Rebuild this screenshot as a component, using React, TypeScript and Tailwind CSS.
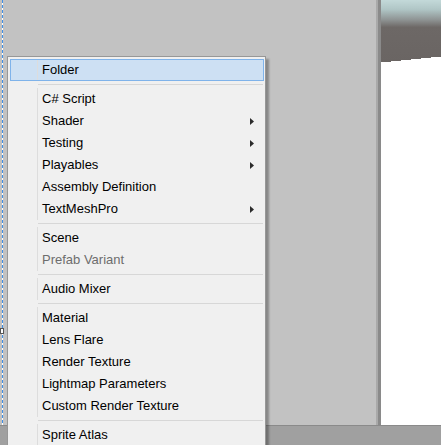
type Entry =
  | { kind: "item"; label: string; sub?: boolean; disabled?: boolean; active?: boolean }
  | { kind: "sep" };

const entries: Entry[] = [
  { kind: "item", label: "Folder", active: true },
  { kind: "sep" },
  { kind: "item", label: "C# Script" },
  { kind: "item", label: "Shader", sub: true },
  { kind: "item", label: "Testing", sub: true },
  { kind: "item", label: "Playables", sub: true },
  { kind: "item", label: "Assembly Definition" },
  { kind: "item", label: "TextMeshPro", sub: true },
  { kind: "sep" },
  { kind: "item", label: "Scene" },
  { kind: "item", label: "Prefab Variant", disabled: true },
  { kind: "sep" },
  { kind: "item", label: "Audio Mixer" },
  { kind: "sep" },
  { kind: "item", label: "Material" },
  { kind: "item", label: "Lens Flare" },
  { kind: "item", label: "Render Texture" },
  { kind: "item", label: "Lightmap Parameters" },
  { kind: "item", label: "Custom Render Texture" },
  { kind: "sep" },
  { kind: "item", label: "Sprite Atlas" },
];

const Arrow = () => (
  <svg width="4" height="7" viewBox="0 0 4 7" className="block">
    <path d="M0 0 L4 3.5 L0 7 Z" fill="#2b2b2b" />
  </svg>
);

const MenuRow = ({ e }: { e: Entry }) => {
  if (e.kind === "sep") {
    return (
      <div className="h-[7px] flex flex-col justify-center pl-[28px] pr-[1px]">
        <div className="h-px bg-[#d7d7d7]" />
      </div>
    );
  }
  return (
    <div
      className={`relative h-[22px] flex items-center ${
        e.active ? "bg-[#cde0f3] outline outline-1 -outline-offset-1 outline-[#7fb3ea]" : ""
      }`}
    >
      <div className="w-[27px] self-stretch" />
      <div className="w-px self-stretch bg-[#dddddd]" />
      <span
        className={`ml-[4px] mb-[2px] flex-1 text-[13px] leading-none ${
          e.disabled ? "text-[#6d6d6d]" : "text-black"
        }`}
      >
        {e.label}
      </span>
      {e.sub && (
        <div className="mr-[10px]">
          <Arrow />
        </div>
      )}
    </div>
  );
};

const ScenePreview = () => (
  <svg width="60" height="64" viewBox="0 0 60 64" className="block">
    <defs>
      <linearGradient id="sky" x1="0" y1="0" x2="0" y2="1">
        <stop offset="0" stopColor="#c3d9d9" />
        <stop offset="0.15" stopColor="#b0c6c6" />
        <stop offset="0.32" stopColor="#8e9393" />
        <stop offset="0.44" stopColor="#6d6866" />
        <stop offset="1" stopColor="#6a6563" />
      </linearGradient>
    </defs>
    <path
      d="M0 0 H60 V57 H50 V58 H40 V59 H30 V60 H20 V61 H10 V62 H0 Z"
      fill="url(#sky)"
    />
  </svg>
);

export default function App() {
  return (
    <div
      className="relative w-[441px] h-[445px] overflow-hidden bg-[#c2c2c2]"
      style={{ fontFamily: '"Liberation Sans", Arial, sans-serif' }}
    >
      <div className="flex flex-col h-full">
        <div className="flex h-[425px]">
          <div className="w-[377px] flex">
            <div className="w-px ml-[2px] bg-[repeating-linear-gradient(to_bottom,#3f8fe6_0_3px,#ffffff_3px_5px)]" />
            <div className="flex-1" />
          </div>
          <div className="w-[2px] bg-[#a9a9a9]" />
          <div className="w-[3px] bg-[#8a8a8a]" />
          <div className="flex-1 flex flex-col bg-white">
            <ScenePreview />
          </div>
        </div>
        <div className="flex-1 bg-[#a0a0a0] border-t border-[#8a8a8a]" />
      </div>

      {/* handle on dashed line */}
      <div className="absolute left-0 top-[328px] w-[4px] h-[6px] bg-white border border-[#555]" />

      {/* context menu */}
      <div className="absolute left-[7px] top-[56px] w-[259px] bg-[#f0f0f0] border border-[#979797] pl-[2px] pr-[1px] pt-[2px] shadow-[3px_3px_2px_rgba(0,0,0,0.3)]">
        {entries.map((e, i) => (
          <MenuRow key={i} e={e} />
        ))}
      </div>
    </div>
  );
}
